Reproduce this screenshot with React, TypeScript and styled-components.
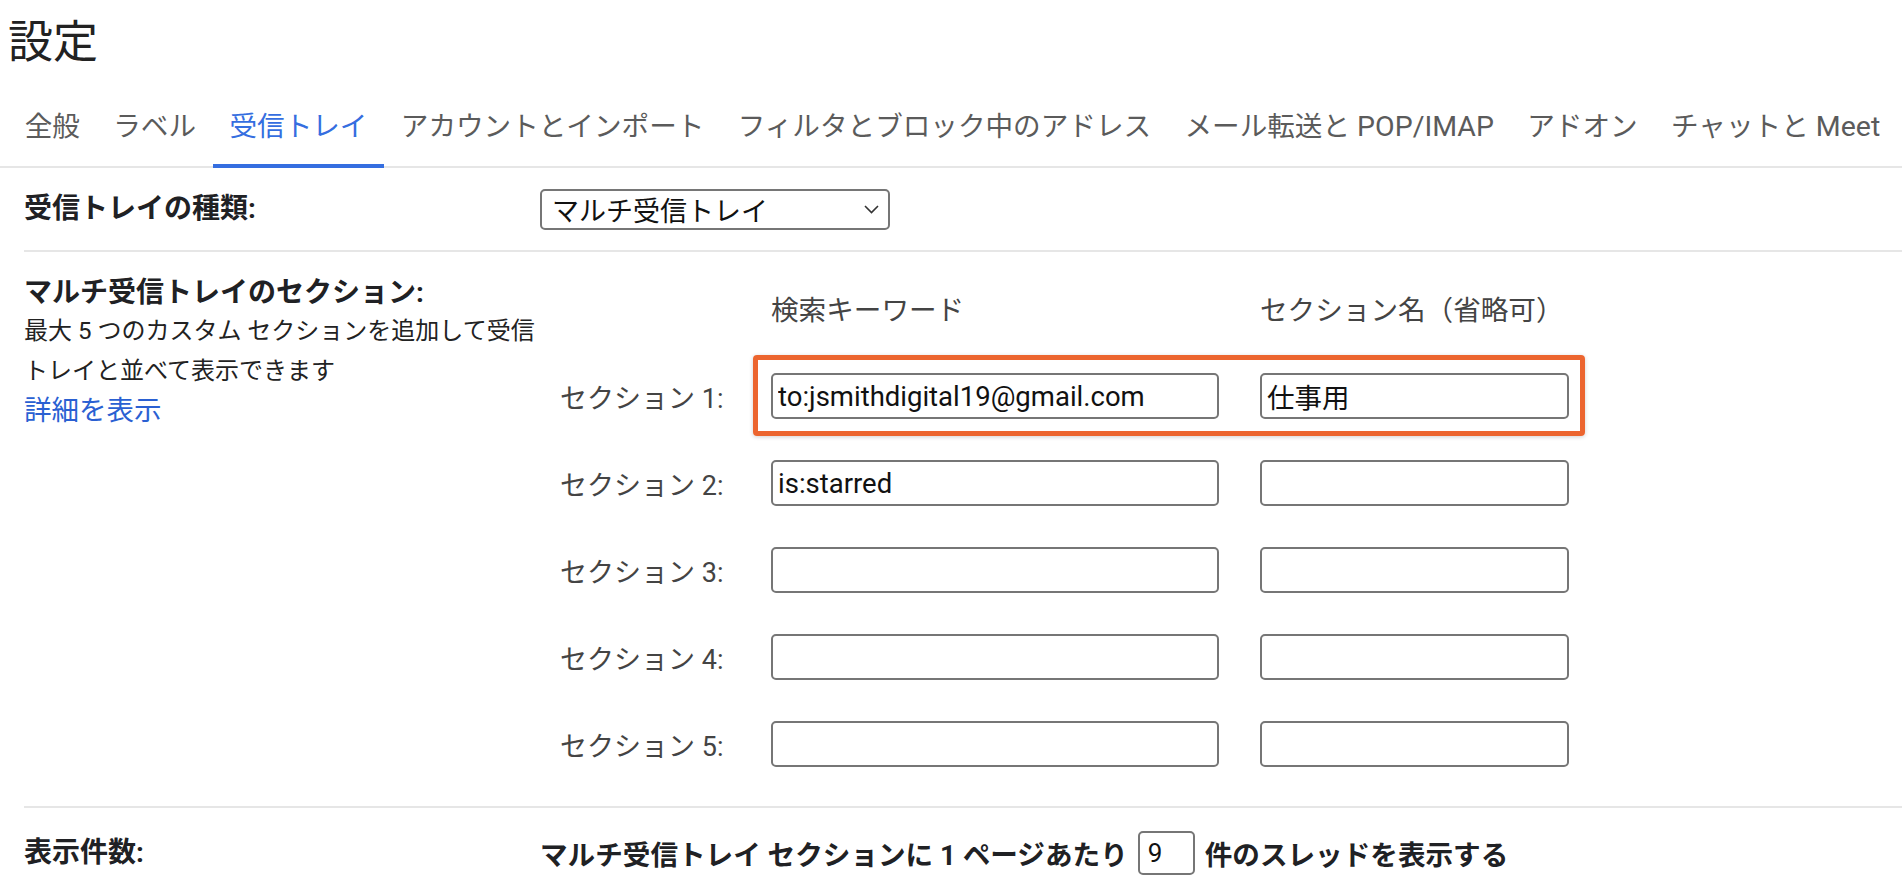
import React from "react";
import styled, { createGlobalStyle } from "styled-components";

const GlobalStyle = createGlobalStyle`
  html, body { margin: 0; padding: 0; background: #fff; }
  body {
    font-family: Roboto, "Noto Sans CJK JP", sans-serif;
    color: #202124;
  }
  * { box-sizing: border-box; }
`;

const Page = styled.div`
  width: 1902px;
  height: 890px;
  overflow: hidden;
  display: flex;
  flex-direction: column;
`;

const Title = styled.h1`
  margin: 0;
  height: 84px;
  padding: 17px 0 0 8px;
  font-size: 45px;
  font-weight: 400;
  line-height: 52px;
  color: #222;
`;

const TabBar = styled.nav`
  display: flex;
  height: 84px;
  padding-left: 8px;
  border-bottom: 2px solid #e6e6e6;
`;

const Tab = styled.div<{ $active?: boolean }>`
  display: flex;
  align-items: center;
  height: 84px;
  margin-bottom: -2px;
  padding: 0 16.7px;
  border-bottom: 4px solid ${(p) => (p.$active ? "#356ee0" : "transparent")};
  font-size: 27.6px;
  color: ${(p) => (p.$active ? "#356ee0" : "#5b5b5b")};
  white-space: nowrap;
`;

const Latin = styled.span`
  font-size: 28.5px;
`;

const Content = styled.div`
  padding-left: 24px;
`;

const SettingRow = styled.div<{ $minHeight?: number; $align?: string }>`
  display: grid;
  grid-template-columns: 516px 1fr;
  align-items: ${(p) => p.$align ?? "center"};
  min-height: ${(p) => p.$minHeight ?? 0}px;
  border-bottom: 2px solid #e6e6e6;
`;

const PlainRow = styled.div`
  display: grid;
  grid-template-columns: 516px 1fr;
  align-items: center;
  padding-top: 23px;
`;

const BoldLabel = styled.div`
  font-size: 28px;
  font-weight: 700;
  line-height: 36px;
  color: #202124;
  white-space: nowrap;
`;

const LeftBlock = styled.div`
  padding-top: 23px;
`;

const Description = styled.div`
  font-size: 24px;
  line-height: 40px;
  color: #222;
  white-space: nowrap;
`;

const Link = styled.a`
  display: block;
  font-size: 27.5px;
  line-height: 40px;
  color: #2a60d2;
  text-decoration: none;
`;

const SelectBox = styled.div`
  display: flex;
  align-items: center;
  justify-content: space-between;
  width: 350px;
  height: 41px;
  padding: 0 9px 0 10px;
  border: 2px solid #767676;
  border-radius: 5px;
  font-size: 27px;
  color: #111;
`;

const Chevron = styled.svg`
  width: 15px;
  height: 9px;
`;

const SectionsBlock = styled.div`
  padding: 39px 0 39px 0;
`;

const HeaderLine = styled.div`
  display: flex;
  column-gap: 41px;
  padding-left: 231px;
  margin-bottom: 42px;
`;

const ColHeader = styled.div<{ $w: number }>`
  width: ${(p) => p.$w}px;
  font-size: 27.6px;
  line-height: 40px;
  color: #444;
  white-space: nowrap;
`;

const SectionList = styled.div`
  display: flex;
  flex-direction: column;
  row-gap: 41px;
`;

const SectionRow = styled.div`
  display: flex;
  align-items: center;
  height: 46px;
`;

const SectionLabel = styled.div`
  width: 231px;
  padding-left: 20px;
  font-size: 27px;
  color: #444;
  white-space: nowrap;
`;

const Fields = styled.div`
  position: relative;
  display: flex;
  column-gap: 41px;
`;

const Highlight = styled.div`
  position: absolute;
  top: -18px;
  left: -18px;
  right: -16px;
  bottom: -17px;
  border: 5px solid #ec652f;
  border-radius: 4px;
  box-shadow: 0 1px 4px rgba(0, 0, 0, 0.18);
  pointer-events: none;
`;

const TextField = styled.input<{ $w: number }>`
  width: ${(p) => p.$w}px;
  height: 46px;
  padding: 0 5px;
  border: 2px solid #767676;
  border-radius: 5px;
  font-family: Roboto, "Noto Sans CJK JP", sans-serif;
  font-size: 27.5px;
  color: #111;
  background: #fff;
  outline: none;
`;

const InlineBold = styled.div`
  display: flex;
  align-items: center;
  column-gap: 10px;
  font-size: 27.6px;
  font-weight: 700;
  color: #202124;
  white-space: nowrap;
`;

const SmallField = styled.input`
  width: 57px;
  height: 44px;
  padding: 0 8px;
  border: 2px solid #767676;
  border-radius: 5px;
  font-family: Roboto, "Noto Sans CJK JP", sans-serif;
  font-size: 26px;
  color: #111;
  outline: none;
`;

const tabs: { label: string; latin?: string }[] = [
  { label: "全般" },
  { label: "ラベル" },
  { label: "受信トレイ" },
  { label: "アカウントとインポート" },
  { label: "フィルタとブロック中のアドレス" },
  { label: "メール転送と", latin: "POP/IMAP" },
  { label: "アドオン" },
  { label: "チャットと", latin: "Meet" },
];

const sections = [
  { keyword: "to:jsmithdigital19@gmail.com", name: "仕事用" },
  { keyword: "is:starred", name: "" },
  { keyword: "", name: "" },
  { keyword: "", name: "" },
  { keyword: "", name: "" },
];

export default function App() {
  return (
    <Page>
      <GlobalStyle />
      <Title>設定</Title>
      <TabBar>
        {tabs.map((t) => (
          <Tab key={t.label} $active={t.label === "受信トレイ"}>
            <span>
              {t.label}
              {t.latin && <Latin> {t.latin}</Latin>}
            </span>
          </Tab>
        ))}
      </TabBar>
      <Content>
        <SettingRow $minHeight={84}>
          <BoldLabel>受信トレイの種類:</BoldLabel>
          <SelectBox>
            <span>マルチ受信トレイ</span>
            <Chevron viewBox="0 0 15 9">
              <path d="M1 1 L7.5 7.5 L14 1" fill="none" stroke="#333" strokeWidth="1.6" />
            </Chevron>
          </SelectBox>
        </SettingRow>

        <SettingRow $align="start">
          <LeftBlock>
            <BoldLabel>マルチ受信トレイのセクション:</BoldLabel>
            <Description>
              最大 5 つのカスタム セクションを追加して受信
              <br />
              トレイと並べて表示できます
            </Description>
            <Link href="#">詳細を表示</Link>
          </LeftBlock>
          <SectionsBlock>
            <HeaderLine>
              <ColHeader $w={448}>検索キーワード</ColHeader>
              <ColHeader $w={309}>セクション名（省略可）</ColHeader>
            </HeaderLine>
            <SectionList>
              {sections.map((s, i) => (
                <SectionRow key={i}>
                  <SectionLabel>セクション {i + 1}:</SectionLabel>
                  <Fields>
                    {i === 0 && <Highlight />}
                    <TextField $w={448} value={s.keyword} readOnly />
                    <TextField $w={309} value={s.name} readOnly />
                  </Fields>
                </SectionRow>
              ))}
            </SectionList>
          </SectionsBlock>
        </SettingRow>

        <PlainRow>
          <BoldLabel>表示件数:</BoldLabel>
          <InlineBold>
            <span>マルチ受信トレイ セクションに 1 ページあたり</span>
            <SmallField value="9" readOnly />
            <span>件のスレッドを表示する</span>
          </InlineBold>
        </PlainRow>
      </Content>
    </Page>
  );
}
